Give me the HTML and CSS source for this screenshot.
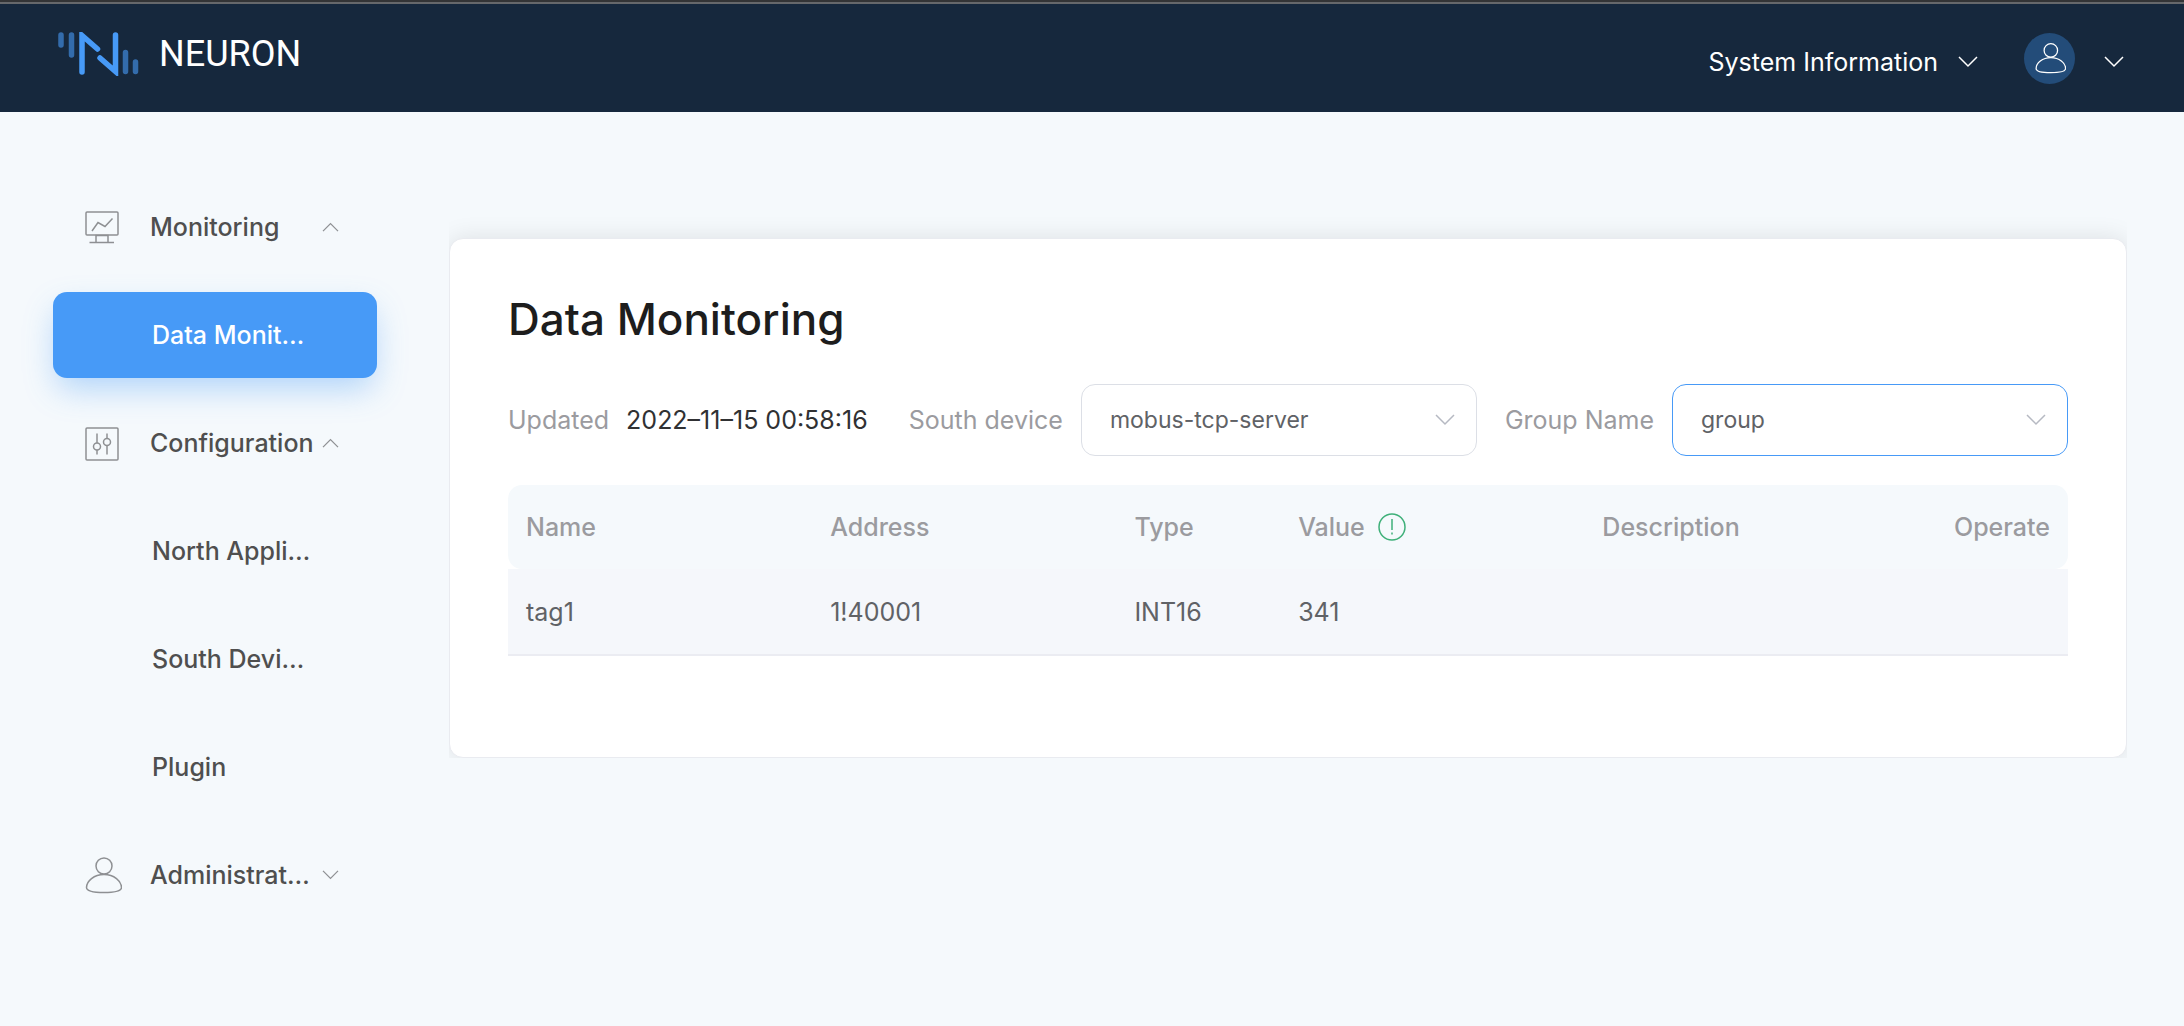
FILE: index.html
```html
<!DOCTYPE html>
<html lang="en">
<head>
<meta charset="utf-8">
<meta name="viewport" content="width=device-width, initial-scale=1">
<title>Neuron - Data Monitoring</title>
<link rel="stylesheet" href="styles.css">
</head>
<body>
<svg class="sprite" aria-hidden="true">
  <symbol id="chevron" viewBox="0 0 20 12"><path d="M1 1l9 9 9-9"/></symbol>
  <symbol id="user" viewBox="0 0 38 38"><circle cx="20" cy="10" r="8"/><path d="M20 18.500C30 18.500 37.500 25 37.500 31.500C37.500 35.500 31 36.500 20 36.500S2.500 35.500 2.500 31.500C2.500 25 10 18.500 20 18.500Z"/></symbol>
</svg>

<header class="topbar">
  <a class="brand" href="#">
    <svg class="brand-mark" viewBox="0 0 82 44" aria-hidden="true">
      <g class="brand-bars"><path d="M3 3v10M13.500 3v20M67.500 20.500v19M77.500 30v9.500"/></g>
      <path d="M24 40V3.500L39.500 17M57.500 3v36.500L42 26"/>
    </svg>
    <span class="brand-name">NEURON</span>
  </a>
  <div class="topbar-actions">
    <button class="info-menu" type="button">System Information
      <svg class="chevron" aria-hidden="true"><use href="#chevron"/></svg>
    </button>
    <button class="user-menu" type="button" aria-label="User menu">
      <span class="avatar"><svg aria-hidden="true"><use href="#user"/></svg></span>
      <svg class="chevron" aria-hidden="true"><use href="#chevron"/></svg>
    </button>
  </div>
</header>

<div class="layout">
  <nav class="sidebar" aria-label="Main">
    <button class="nav-group" type="button" aria-expanded="true">
      <svg class="nav-icon" viewBox="0 0 38 38" aria-hidden="true"><rect x="2" y="4" width="32" height="23" rx="1"/><path d="M8 23l6-8.500 7 4 7.500-8M12 27.500h12v7H12zM5.500 34.500h24.500"/></svg>
      <span class="nav-label">Monitoring</span>
      <svg class="chevron open" aria-hidden="true"><use href="#chevron"/></svg>
    </button>
    <a class="nav-item active" href="#" aria-current="page"><span>Data Monit…</span></a>
    <button class="nav-group" type="button" aria-expanded="true">
      <svg class="nav-icon" viewBox="0 0 38 38" aria-hidden="true"><rect x="2" y="4" width="32" height="32" rx="1"/><circle cx="13" cy="22.500" r="3.500"/><circle cx="23" cy="18" r="3.500"/><path d="M13 9.500V19M13 26v4.500M23 9.500v5M23 21.500v9"/></svg>
      <span class="nav-label">Configuration</span>
      <svg class="chevron open" aria-hidden="true"><use href="#chevron"/></svg>
    </button>
    <a class="nav-item" href="#"><span>North Appli…</span></a>
    <a class="nav-item" href="#"><span>South Devi…</span></a>
    <a class="nav-item" href="#"><span>Plugin</span></a>
    <button class="nav-group" type="button" aria-expanded="false">
      <svg class="nav-icon" aria-hidden="true"><use href="#user"/></svg>
      <span class="nav-label">Administrat…</span>
      <svg class="chevron" aria-hidden="true"><use href="#chevron"/></svg>
    </button>
  </nav>

  <main class="content">
    <section class="card">
      <h1>Data Monitoring</h1>
      <form class="filters">
        <p class="updated">Updated <time datetime="2022-11-15T00:58:16">2022–11–15 00:58:16</time></p>
        <div class="field">
          <label for="device">South device</label>
          <div class="select">
            <select id="device"><option>mobus-tcp-server</option></select>
            <svg class="chevron" aria-hidden="true"><use href="#chevron"/></svg>
          </div>
        </div>
        <div class="field">
          <label for="group">Group Name</label>
          <div class="select focused">
            <select id="group"><option>group</option></select>
            <svg class="chevron" aria-hidden="true"><use href="#chevron"/></svg>
          </div>
        </div>
      </form>
      <table>
        <colgroup><col class="wide"><col class="wide"><col class="narrow"><col class="wide"><col class="wide"><col></colgroup>
        <thead>
          <tr>
            <th scope="col">Name</th>
            <th scope="col">Address</th>
            <th scope="col">Type</th>
            <th scope="col"><span class="with-hint">Value
              <svg class="hint" viewBox="0 0 28 28" role="img" aria-label="Note"><circle cx="14" cy="14" r="13"/><path d="M14 6v11M14 19.500v2"/></svg></span></th>
            <th scope="col">Description</th>
            <th scope="col" class="end">Operate</th>
          </tr>
        </thead>
        <tbody>
          <tr><td>tag1</td><td>1!40001</td><td>INT16</td><td>341</td><td></td><td></td></tr>
        </tbody>
      </table>
    </section>
  </main>
</div>
</body>
</html>
```

FILE: styles.css
```css
* { box-sizing: border-box; }

body {
  margin: 0;
  background: #f5f9fc;
  color: #4f4f4f;
  font: 25px/36px Inter, "Liberation Sans", sans-serif;
}

button, select { font: inherit; color: inherit; }
button { border: 0; padding: 0; background: none; text-align: left; cursor: pointer; }
a { color: inherit; text-decoration: none; }
svg { flex: none; fill: none; stroke: currentColor; stroke-width: 1.5px; }
.sprite { position: absolute; width: 0; height: 0; }
.chevron { width: 20px; height: 12px; }

/* Top bar */
.topbar {
  display: flex;
  align-items: center;
  justify-content: space-between;
  height: 112px;
  padding: 2px 60px 0 58px;
  border-top: 2px solid #333436;
  box-shadow: inset 0 2px #66686b;
  background: #16283d;
  color: #fff;
}
.brand { display: flex; align-items: center; gap: 19px; padding-bottom: 8px; }
.brand-mark { width: 82px; height: 44px; color: #479af7; stroke-width: 5.500px; stroke-linecap: round; }
.brand-bars { opacity: .6; }
.brand-name { font: 36px/44px Roboto, sans-serif; }
.topbar-actions { display: flex; align-items: center; gap: 46px; }
.info-menu { display: flex; align-items: center; gap: 20px; padding-top: 8px; }
.user-menu { display: flex; align-items: center; gap: 29px; }
.user-menu > .chevron { margin-top: 8px; }
.avatar { display: grid; place-items: center; width: 51px; height: 51px; border-radius: 50%; background: #234c79; }
.avatar svg { width: 32px; height: 32px; stroke-width: 1.5px; }

.layout { display: flex; align-items: flex-start; gap: 72px; padding: 72px 57px 72px 53px; }

/* Side menu */
.sidebar { display: grid; gap: 22px; width: 324px; flex: none; font-weight: 500; }
.nav-group, .nav-item { display: flex; align-items: center; height: 86px; }
.nav-group { padding-left: 31px; }
.nav-icon { width: 38px; height: 38px; margin-right: 28px; color: #8e9093; }
.nav-label { width: 172px; white-space: nowrap; }
.nav-group .chevron { width: 17px; height: 10px; color: #8e9093; }
.open { transform: rotate(180deg); }
.nav-item { padding-left: 99px; border-radius: 14px; }
.active { background: #479af7; color: #fff; box-shadow: 0 14px 32px -4px #479af766; }

/* Card */
.content { flex: 1; min-width: 0; padding-top: 54px; }
.card {
  padding: 58px 58px 101px;
  border: 1px solid #e9ebf0;
  border-radius: 14px;
  background: #fff;
  box-shadow: 0 0 24px #0000001a;
  clip-path: inset(-40px 0 0 0);
}
h1 { margin: 0; color: #1d1d1d; font-size: 44px; font-weight: 500; line-height: 44px; }

.filters { display: flex; align-items: center; gap: 28px; margin: 43px 0 29px; color: #9b9b9f; }
.updated { margin: 0 auto 0 0; }
.updated time { margin-left: 10px; color: #303133; }
.field { display: flex; align-items: center; gap: 18px; }
.select { display: grid; align-items: center; width: 396px; }
.select > * { grid-area: 1 / 1; }
.select .chevron { justify-self: end; margin-right: 22px; color: #b6b9c2; pointer-events: none; }
select {
  appearance: none;
  width: 100%;
  height: 72px;
  padding: 0 28px;
  border: 1px solid #dcdfe6;
  border-radius: 14px;
  background: #fff;
  color: #606266;
  font-size: 23px;
}
.focused select { border-color: #479af7; }

table { width: 100%; table-layout: fixed; border-spacing: 0; }
.wide { width: 19.5%; }
.narrow { width: 10.5%; }
th, td { padding: 0 18px; text-align: left; }
th { height: 84px; background: #f5f9fc; color: #9b9b9f; font-weight: 500; }
th:first-child { border-radius: 14px 0 0 14px; }
th:last-child { border-radius: 0 14px 14px 0; }
td { height: 87px; border-bottom: 2px solid #ebecf2; background: #f5f7fb; color: #606266; }
.end { text-align: right; }
.with-hint { display: flex; align-items: center; gap: 13px; }
.hint { width: 28px; height: 28px; color: #3fb079; }
```
